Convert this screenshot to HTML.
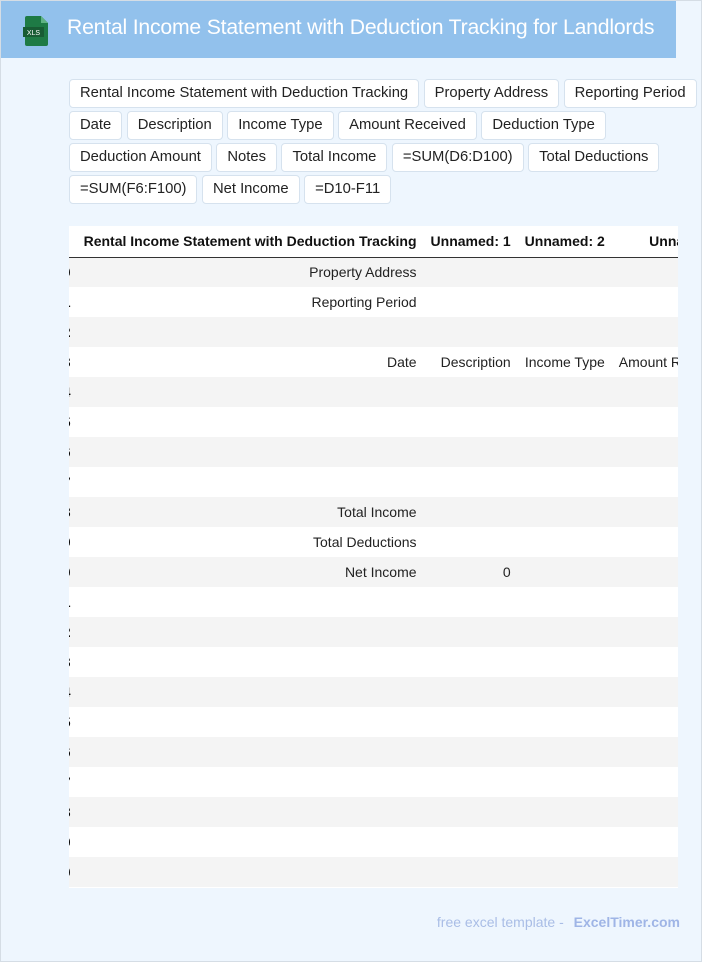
<!DOCTYPE html>
<html><head><meta charset="utf-8"><style>
*{box-sizing:border-box;margin:0;padding:0}
body{width:702px;height:962px;background:#eef6fe;font-family:"Liberation Sans",sans-serif;position:relative;overflow:hidden;border:1px solid #d5dde5}
.hdr{position:absolute;left:0;top:0;width:675px;height:57px;background:#92c1ec}
.hdr h1{position:absolute;left:66px;top:15px;font-size:21.2px;font-weight:normal;color:#fff;letter-spacing:-0.2px}
.chips{position:absolute;left:68px;top:78px;width:634px}
.chip{display:inline-block;height:29px;line-height:27px;padding:0 10px;background:#fff;border:1px solid #d6e2ee;border-radius:4px;font-size:14.8px;color:#222;margin:0 0 3px 0;white-space:nowrap}
.row{height:32px;white-space:nowrap}
.tw{position:absolute;left:68px;top:225px;width:609px;height:662px;overflow:hidden;background:#fff}
table{border-collapse:collapse;font-size:14px;color:#222;margin-left:-14px}
td,th{height:30px;padding:0 7px;text-align:right;white-space:nowrap}
th{font-weight:bold;color:#111;border-bottom:1.5px solid #333;height:31px}
tr:nth-child(even) td{background:#f4f4f4}
td.i{font-weight:bold;color:#000;width:20px;padding:0 6px 0 0;text-align:right}
.foot{position:absolute;right:21px;top:913px;font-size:14px;color:#a9bde6}
.foot b{color:#9fb5e6;margin-left:6px}
</style></head><body>
<div class="hdr">
<svg style="position:absolute;left:21px;top:13px" width="30" height="32" viewBox="0 0 30 32"><path d="M5 2h14l7 7v21a2 2 0 0 1-2 2H5a2 2 0 0 1-2-2V4a2 2 0 0 1 2-2z" fill="#1e7a45"/><path d="M19 2v7h7z" fill="#5fb383"/><rect x="1" y="13" width="21" height="10" fill="#185c34"/><text x="11.5" y="21" font-size="7" fill="#fff" text-anchor="middle" font-family="Liberation Sans">XLS</text></svg>
<h1>Rental Income Statement with Deduction Tracking for Landlords</h1></div>
<div class="chips">
<div class="row"><span class="chip">Rental Income Statement with Deduction Tracking</span> <span class="chip">Property Address</span> <span class="chip">Reporting Period</span></div>
<div class="row"><span class="chip">Date</span> <span class="chip">Description</span> <span class="chip">Income Type</span> <span class="chip">Amount Received</span> <span class="chip">Deduction Type</span></div>
<div class="row"><span class="chip">Deduction Amount</span> <span class="chip">Notes</span> <span class="chip">Total Income</span> <span class="chip">=SUM(D6:D100)</span> <span class="chip">Total Deductions</span></div>
<div class="row"><span class="chip">=SUM(F6:F100)</span> <span class="chip">Net Income</span> <span class="chip">=D10-F11</span></div>
</div>
<div class="tw"><table>
<tr><th class="i"></th><th style="width:337px">Rental Income Statement with Deduction Tracking</th><th style="width:94px">Unnamed: 1</th><th style="width:94px">Unnamed: 2</th><th style="width:94px">Unnamed: 3</th></tr>
<tr><td class="i">0</td><td>Property Address</td><td></td><td></td><td></td></tr>
<tr><td class="i">1</td><td>Reporting Period</td><td></td><td></td><td></td></tr>
<tr><td class="i">2</td><td></td><td></td><td></td><td></td></tr>
<tr><td class="i">3</td><td>Date</td><td>Description</td><td>Income Type</td><td>Amount Received</td></tr>
<tr><td class="i">4</td><td></td><td></td><td></td><td></td></tr>
<tr><td class="i">5</td><td></td><td></td><td></td><td></td></tr>
<tr><td class="i">6</td><td></td><td></td><td></td><td></td></tr>
<tr><td class="i">7</td><td></td><td></td><td></td><td></td></tr>
<tr><td class="i">8</td><td>Total Income</td><td></td><td></td><td></td></tr>
<tr><td class="i">9</td><td>Total Deductions</td><td></td><td></td><td></td></tr>
<tr><td class="i">10</td><td>Net Income</td><td>0</td><td></td><td></td></tr>
<tr><td class="i">11</td><td></td><td></td><td></td><td></td></tr>
<tr><td class="i">12</td><td></td><td></td><td></td><td></td></tr>
<tr><td class="i">13</td><td></td><td></td><td></td><td></td></tr>
<tr><td class="i">14</td><td></td><td></td><td></td><td></td></tr>
<tr><td class="i">15</td><td></td><td></td><td></td><td></td></tr>
<tr><td class="i">16</td><td></td><td></td><td></td><td></td></tr>
<tr><td class="i">17</td><td></td><td></td><td></td><td></td></tr>
<tr><td class="i">18</td><td></td><td></td><td></td><td></td></tr>
<tr><td class="i">19</td><td></td><td></td><td></td><td></td></tr>
<tr><td class="i">20</td><td></td><td></td><td></td><td></td></tr>
</table></div>
<div class="foot">free excel template - <b>ExcelTimer.com</b></div>
</body></html>
